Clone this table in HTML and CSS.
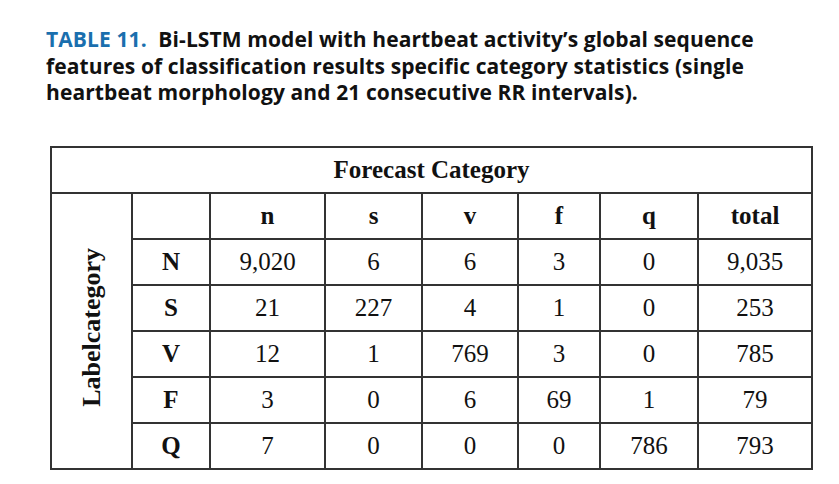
FILE: index.html
```html
<!DOCTYPE html>
<html lang="en">
<head>
<meta charset="utf-8">
<title>Table 11</title>
<link rel="stylesheet" href="styles.css">
</head>
<body>
<div class="page">
  <p class="caption"><span class="label">TABLE 11.</span> Bi-LSTM model with heartbeat activity’s global sequence features of classification results specific category statistics (single heartbeat morphology and 21 consecutive RR intervals).</p>
  <table class="stats">
    <colgroup>
      <col class="c-lab"><col class="c-row"><col class="c-n"><col class="c-s"><col class="c-v"><col class="c-f"><col class="c-q"><col class="c-t">
    </colgroup>
    <tr class="r-top"><th colspan="8">Forecast Category</th></tr>
    <tr>
      <th rowspan="6" class="vert"><span>Labelcategory</span></th>
      <th></th><th>n</th><th>s</th><th>v</th><th>f</th><th>q</th><th>total</th>
    </tr>
    <tr><th>N</th><td>9,020</td><td>6</td><td>6</td><td>3</td><td>0</td><td>9,035</td></tr>
    <tr><th>S</th><td>21</td><td>227</td><td>4</td><td>1</td><td>0</td><td>253</td></tr>
    <tr><th>V</th><td>12</td><td>1</td><td>769</td><td>3</td><td>0</td><td>785</td></tr>
    <tr><th>F</th><td>3</td><td>0</td><td>6</td><td>69</td><td>1</td><td>79</td></tr>
    <tr><th>Q</th><td>7</td><td>0</td><td>0</td><td>0</td><td>786</td><td>793</td></tr>
  </table>
</div>
</body>
</html>
```
FILE: styles.css
```css
html, body {
  margin: 0;
  padding: 0;
  background: #ffffff;
}
.page {
  padding: 26px 0 0 46px;
}
.caption {
  margin: 0;
  width: 730px;
  font-family: "Open Sans", "Noto Sans", sans-serif;
  font-weight: 700;
  font-size: 21px;
  line-height: 26.5px;
  letter-spacing: 0.1px;
  color: #111;
}
.label {
  display: inline-block;
  margin-right: 6px;
  color: #1a6fae;
}
.stats {
  margin: 40px 0 0 4px;
  border-collapse: collapse;
  table-layout: fixed;
  width: 761px;
  font-family: "Liberation Serif", "Times New Roman", serif;
  font-size: 25px;
  color: #111;
}
.c-lab { width: 81px; }
.c-row { width: 78px; }
.c-n { width: 115px; }
.c-s { width: 97px; }
.c-v { width: 96px; }
.c-f { width: 82px; }
.c-q { width: 98px; }
.c-t { width: 114px; }
.stats th, .stats td {
  border: 2px solid #333;
  text-align: center;
  vertical-align: middle;
  padding: 0;
  height: 44px;
}
.stats td {
  font-weight: 400;
}
.stats th {
  font-weight: 700;
}
.vert span {
  display: inline-block;
  writing-mode: vertical-rl;
  transform: rotate(180deg);
  font-size: 26px;
  line-height: 1;
}
```
